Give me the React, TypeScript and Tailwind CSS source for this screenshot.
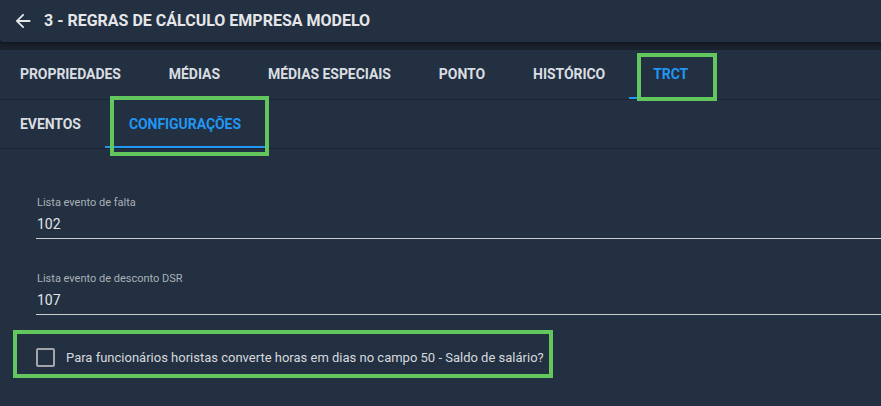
import React from "react";

const tabs1 = ["PROPRIEDADES", "MÉDIAS", "MÉDIAS ESPECIAIS", "PONTO", "HISTÓRICO", "TRCT"];
const tabs2 = ["EVENTOS", "CONFIGURAÇÕES"];

function Tab({ label, active }: { label: string; active: boolean }) {
  return (
    <div className="relative h-full flex items-center px-6">
      <span
        className={
          "text-[14px] font-bold tracking-[-0.06px] " +
          (active ? "text-[#2196f3]" : "text-[#dadde1]")
        }
      >
        {label}
      </span>
      {active && <div className="absolute left-0 right-0 bottom-0 h-[2px] bg-[#2196f3]" />}
    </div>
  );
}

function Field({ label, value }: { label: string; value: string }) {
  return (
    <div className="pl-9">
      <div className="text-[11px] leading-[13px] text-[#aab1b8] pl-[1px]">{label}</div>
      <div className="mt-[5px] h-[20px] leading-[20px] text-[14px] text-[#e2e4e7] pl-[1px]">{value}</div>
      <div className="mt-[4px] h-[1px] bg-[#c9cbcd]" />
    </div>
  );
}

export default function App() {
  return (
    <div
      className="relative w-[881px] h-[406px] overflow-hidden bg-[#19222c] flex flex-col"
      style={{ fontFamily: "Roboto, 'Liberation Sans', sans-serif" }}
    >
      <div className="h-[42px] shrink-0 bg-[#223041] rounded-bl-[4px] shadow-[0_2px_3px_rgba(0,0,0,0.35)] flex items-center pl-3 relative z-10">
        <svg width="22" height="22" viewBox="0 0 24 24" className="text-[#e4e6e9]">
          <path d="M20 11H7.83l5.59-5.59L12 4l-8 8 8 8 1.41-1.41L7.83 13H20v-2z" fill="currentColor" />
        </svg>
        <span className="ml-[10px] text-[16px] font-bold text-[#e4e6e9]">3 - REGRAS DE CÁLCULO EMPRESA MODELO</span>
      </div>
      <div className="h-[8px] shrink-0" />
      <div className="flex-1 bg-[#223041]">
        <div className="h-[50px] border-b border-[#1b2532] flex -ml-1">
          {tabs1.map((t) => (
            <Tab key={t} label={t} active={t === "TRCT"} />
          ))}
        </div>
        <div className="h-[49px] border-b border-[#1b2532] flex -ml-1">
          {tabs2.map((t) => (
            <Tab key={t} label={t} active={t === "CONFIGURAÇÕES"} />
          ))}
        </div>
        <div className="pt-[47px]">
          <Field label="Lista evento de falta" value="102" />
          <div className="h-[33px]" />
          <Field label="Lista evento de desconto DSR" value="107" />
          <div className="mt-[33px] pl-9 flex items-center">
            <div className="w-[19px] h-[19px] border-2 border-[#a3a5a8] rounded-[2px]" />
            <span className="ml-[11px] text-[13px] text-[#d6d9dd]">
              Para funcionários horistas converte horas em dias no campo 50 - Saldo de salário?
            </span>
          </div>
        </div>
      </div>

      <div className="absolute left-[637px] top-[53px] w-[80px] h-[48px] border-[4px] border-[#62c85e] pointer-events-none z-20" />
      <div className="absolute left-[110px] top-[96px] w-[159px] h-[60px] border-[4px] border-[#62c85e] pointer-events-none z-20" />
      <div className="absolute left-[13px] top-[330px] w-[540px] h-[48px] border-[4px] border-[#62c85e] pointer-events-none z-20" />
    </div>
  );
}
